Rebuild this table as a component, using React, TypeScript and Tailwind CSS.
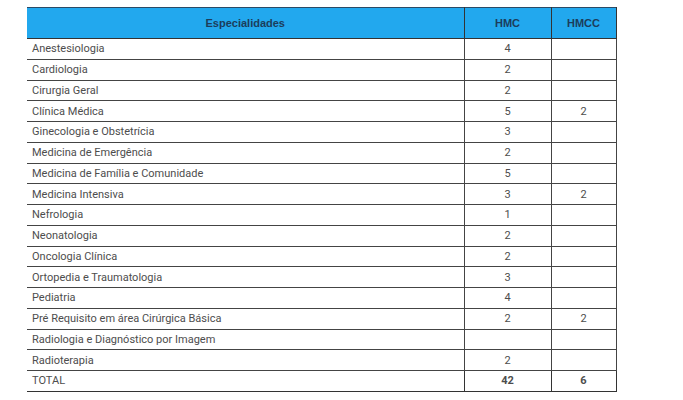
const rows: [string, string, string][] = [
  ['Anestesiologia', '4', ''],
  ['Cardiologia', '2', ''],
  ['Cirurgia Geral', '2', ''],
  ['Clínica Médica', '5', '2'],
  ['Ginecologia e Obstetrícia', '3', ''],
  ['Medicina de Emergência', '2', ''],
  ['Medicina de Família e Comunidade', '5', ''],
  ['Medicina Intensiva', '3', '2'],
  ['Nefrologia', '1', ''],
  ['Neonatologia', '2', ''],
  ['Oncologia Clínica', '2', ''],
  ['Ortopedia e Traumatologia', '3', ''],
  ['Pediatria', '4', ''],
  ['Pré Requisito em área Cirúrgica Básica', '2', '2'],
  ['Radiologia e Diagnóstico por Imagem', '', ''],
  ['Radioterapia', '2', ''],
]

export default function App() {
  return (
    <div className="w-[683px] h-[400px] bg-white pt-[7px] pl-[27px] font-['Roboto',sans-serif]">
      <table className="w-[589px] border-collapse table-fixed text-[11px] text-[#4d4d4d]">
        <colgroup>
          <col className="w-[437px]" />
          <col className="w-[87px]" />
          <col className="w-[65px]" />
        </colgroup>
        <thead>
          <tr className="bg-[#22a8ee] h-[31px] border-t border-[#2a4a66]">
            <th className="font-['Liberation_Sans',Arial,sans-serif] font-bold text-[11px] text-[#1c3d5c] border-b border-[#333]">
              Especialidades
            </th>
            <th className="font-['Liberation_Sans',Arial,sans-serif] font-bold text-[11px] text-[#1c3d5c] border-b border-l border-[#333]">
              HMC
            </th>
            <th className="font-['Liberation_Sans',Arial,sans-serif] font-bold text-[11px] text-[#1c3d5c] border-b border-l border-r border-[#333]">
              HMCC
            </th>
          </tr>
        </thead>
        <tbody>
          {rows.map(([name, hmc, hmcc]) => (
            <tr key={name} className="h-[20.75px]">
              <td className="pl-[5px] border-b border-[#444] leading-none">{name}</td>
              <td className="text-center border-b border-l border-[#444] leading-none">{hmc}</td>
              <td className="text-center border-b border-l border-r border-[#444] leading-none">{hmcc}</td>
            </tr>
          ))}
          <tr className="h-[20.75px]">
            <td className="pl-[5px] border-b border-[#333] leading-none">TOTAL</td>
            <td className="text-center font-bold border-b border-l border-[#333] leading-none">42</td>
            <td className="text-center font-bold border-b border-l border-r border-[#333] leading-none">6</td>
          </tr>
        </tbody>
      </table>
    </div>
  )
}
